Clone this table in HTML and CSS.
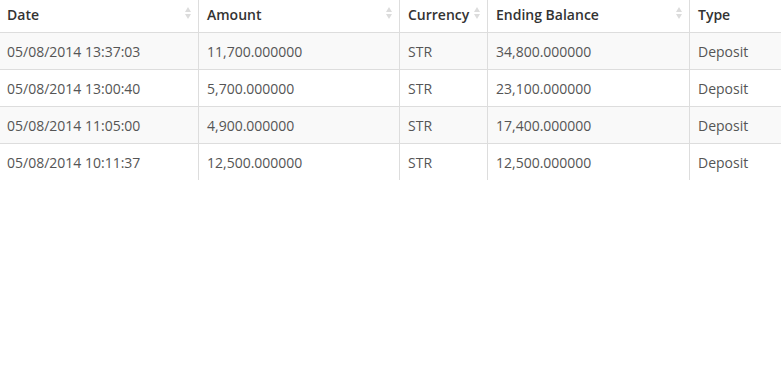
FILE: index.html
```html
<!DOCTYPE html>
<html>
<head>
<meta charset="utf-8">
<link rel="stylesheet" href="styles.css">
</head>
<body>
<table class="grid">
  <colgroup>
    <col class="c-date"><col class="c-amount"><col class="c-cur"><col class="c-bal"><col class="c-type">
  </colgroup>
  <thead>
    <tr>
      <th><span class="th-label">Date</span><svg class="sort" viewBox="0 0 6 12"><path d="M3 0 L6 5 L0 5 Z M3 12 L6 7 L0 7 Z"/></svg></th>
      <th><span class="th-label">Amount</span><svg class="sort" viewBox="0 0 6 12"><path d="M3 0 L6 5 L0 5 Z M3 12 L6 7 L0 7 Z"/></svg></th>
      <th><span class="th-label">Currency</span><svg class="sort" viewBox="0 0 6 12"><path d="M3 0 L6 5 L0 5 Z M3 12 L6 7 L0 7 Z"/></svg></th>
      <th><span class="th-label">Ending Balance</span><svg class="sort" viewBox="0 0 6 12"><path d="M3 0 L6 5 L0 5 Z M3 12 L6 7 L0 7 Z"/></svg></th>
      <th><span class="th-label">Type</span><svg class="sort" viewBox="0 0 6 12"><path d="M3 0 L6 5 L0 5 Z M3 12 L6 7 L0 7 Z"/></svg></th>
    </tr>
  </thead>
  <tbody>
    <tr><td>05/08/2014 13:37:03</td><td>11,700.000000</td><td>STR</td><td>34,800.000000</td><td>Deposit</td></tr>
    <tr><td>05/08/2014 13:00:40</td><td>5,700.000000</td><td>STR</td><td>23,100.000000</td><td>Deposit</td></tr>
    <tr><td>05/08/2014 11:05:00</td><td>4,900.000000</td><td>STR</td><td>17,400.000000</td><td>Deposit</td></tr>
    <tr><td>05/08/2014 10:11:37</td><td>12,500.000000</td><td>STR</td><td>12,500.000000</td><td>Deposit</td></tr>
  </tbody>
</table>
</body>
</html>
```
FILE: styles.css
```css
html, body {
  margin: 0;
  padding: 0;
  overflow: hidden;
  background: #fff;
}
body {
  font-family: "Open Sans", "Liberation Sans", sans-serif;
  font-size: 14px;
  color: #555;
}
.grid {
  border-collapse: collapse;
  table-layout: fixed;
  width: 841px;
  margin-left: -2px;
}
.c-date { width: 200px; }
.c-amount { width: 201px; }
.c-cur { width: 88px; }
.c-bal { width: 202px; }
.c-type { width: 150px; }
.grid th, .grid td {
  border-left: 1px solid #ddd;
  padding: 0 8px;
  text-align: left;
  white-space: nowrap;
  vertical-align: middle;
}
.grid th {
  height: 28px;
  padding-bottom: 4px;
  font-size: 14px;
  font-weight: 600;
  color: #333;
  position: relative;
  border-bottom: 1px solid #ddd;
}
.grid td {
  height: 36px;
}
.grid tbody tr + tr td {
  border-top: 1px solid #ddd;
}
.grid tbody tr:nth-child(odd) td {
  background: #f9f9f9;
}
.sort {
  position: absolute;
  right: 7px;
  top: 7px;
  width: 6px;
  height: 12px;
  fill: #dcdcdc;
}
```
